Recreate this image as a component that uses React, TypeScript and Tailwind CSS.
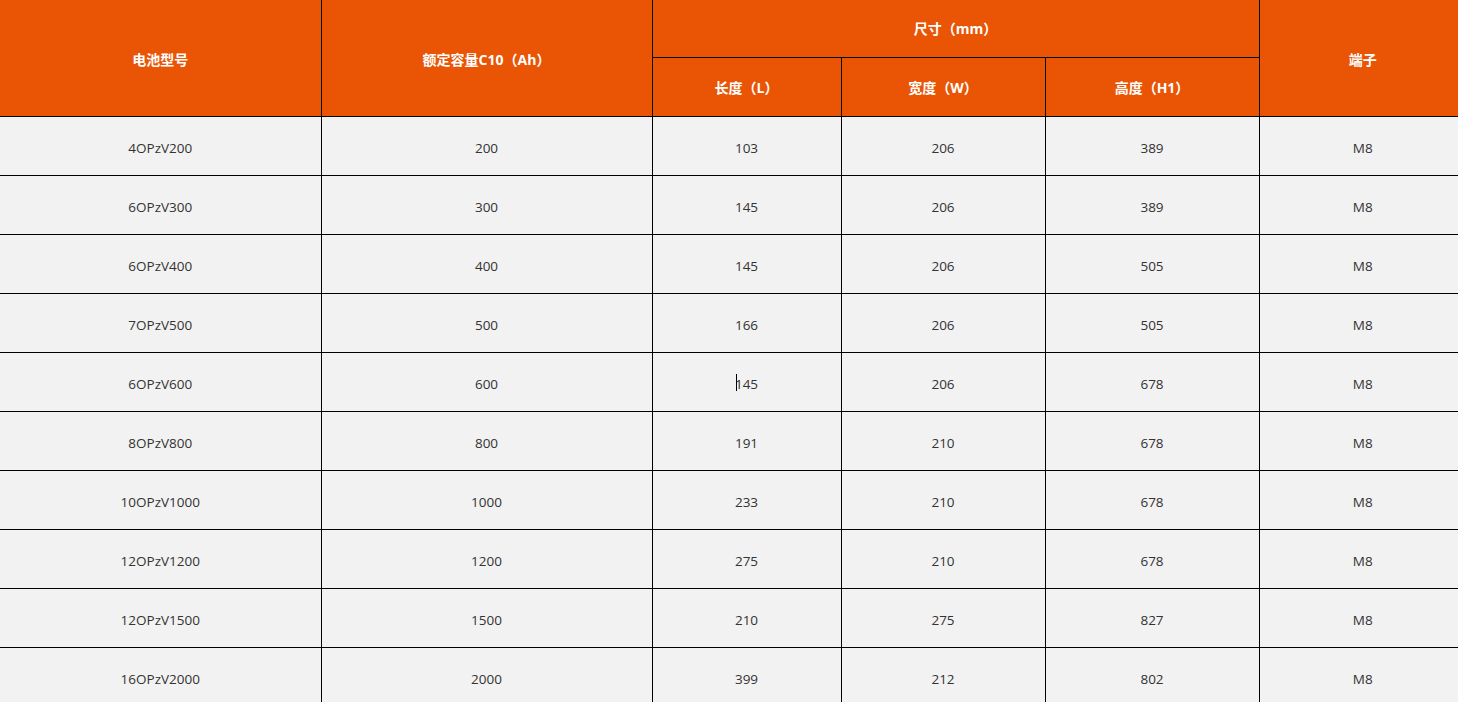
const rows = [
  ["4OPzV200", "200", "103", "206", "389", "M8"],
  ["6OPzV300", "300", "145", "206", "389", "M8"],
  ["6OPzV400", "400", "145", "206", "505", "M8"],
  ["7OPzV500", "500", "166", "206", "505", "M8"],
  ["6OPzV600", "600", "145", "206", "678", "M8"],
  ["8OPzV800", "800", "191", "210", "678", "M8"],
  ["10OPzV1000", "1000", "233", "210", "678", "M8"],
  ["12OPzV1200", "1200", "275", "210", "678", "M8"],
  ["12OPzV1500", "1500", "210", "275", "827", "M8"],
  ["16OPzV2000", "2000", "399", "212", "802", "M8"],
];

const font = { fontFamily: '"Open Sans", "Noto Sans CJK SC", sans-serif' };

export default function App() {
  return (
    <div className="w-[1458px] h-[702px] overflow-hidden bg-[#f2f2f2]" style={font}>
      <table className="w-[1466px] table-fixed border-collapse border-hidden text-center">
        <colgroup>
          <col className="w-[321px]" />
          <col className="w-[331px]" />
          <col className="w-[189px]" />
          <col className="w-[204px]" />
          <col className="w-[214px]" />
          <col className="w-[207px]" />
        </colgroup>
        <thead className="bg-[#e95504] text-white text-[14px] font-bold">
          <tr className="h-[57px]">
            <th rowSpan={2} className="border border-black pt-[4px] font-bold">电池型号</th>
            <th rowSpan={2} className="border border-black pt-[4px] font-bold">额定容量C10（Ah）</th>
            <th colSpan={3} className="border border-black pt-[1px] font-bold">尺寸（mm）</th>
            <th rowSpan={2} className="border border-black pt-[4px] font-bold">端子</th>
          </tr>
          <tr className="h-[59px]">
            <th className="border border-black pt-[2px] font-bold">长度（L）</th>
            <th className="border border-black pt-[2px] font-bold">宽度（W）</th>
            <th className="border border-black pt-[2px] font-bold">高度（H1）</th>
          </tr>
        </thead>
        <tbody className="text-[13.5px] text-[#333]">
          {rows.map((r, i) => (
            <tr key={i} className="h-[59px]">
              {r.map((c, j) => (
                <td key={j} className="border border-black pt-[5px]">
                  {i === 4 && j === 2 ? (
                    <span className="relative">
                      <span className="absolute left-[1px] top-[-1px] h-[17px] w-px bg-black" />
                      {c}
                    </span>
                  ) : (
                    c
                  )}
                </td>
              ))}
            </tr>
          ))}
        </tbody>
      </table>
    </div>
  );
}
